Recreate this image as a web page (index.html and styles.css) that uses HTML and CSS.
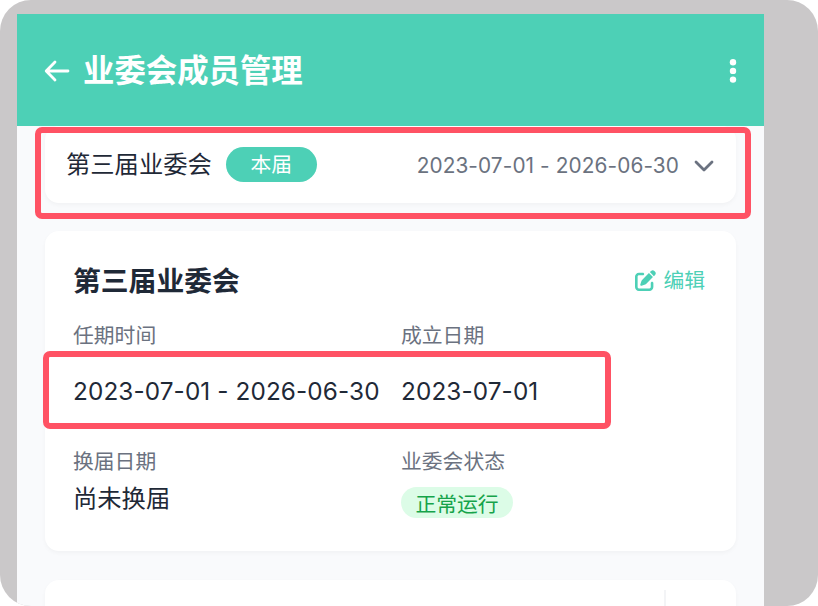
FILE: index.html
```html
<!DOCTYPE html>
<html lang="zh-CN">
<head>
<meta charset="utf-8">
<title>业委会成员管理</title>
<link rel="stylesheet" href="styles.css">
</head>
<body>
<div class="frame">
  <main class="screen">
    <header class="topbar">
      <svg class="back" viewBox="0 0 26 22"><path d="M11 2 2.2 11 11 20M2.5 11H24" /></svg>
      <h1>业委会成员管理</h1>
      <svg class="more" viewBox="0 0 8 26"><circle cx="4" cy="4.2" r="3.2"/><circle cx="4" cy="12.9" r="3.2"/><circle cx="4" cy="21.6" r="3.2"/></svg>
    </header>
    <div class="content">
      <section class="card term">
        <span class="term-name">第三届业委会</span>
        <span class="current">本届</span>
        <span class="range">2023-07-01 - 2026-06-30</span>
        <svg class="chevron" viewBox="0 0 20 12"><path d="M2 2l8 8 8-8"/></svg>
      </section>
      <section class="card detail">
        <div class="detail-head">
          <h2>第三届业委会</h2>
          <a class="edit"><svg viewBox="0 0 512 512"><path d="M471.600 21.700c-21.900-21.900-57.300-21.900-79.200 0L362.300 51.700l97.900 97.900 30.100-30.100c21.900-21.900 21.900-57.300 0-79.200L471.600 21.700zm-299.200 220c-6.100 6.100-10.800 13.600-13.500 21.900l-29.600 88.800c-2.900 8.600-.6 18.100 5.800 24.600s15.900 8.700 24.600 5.800l88.800-29.600c8.200-2.700 15.700-7.400 21.900-13.500L437.700 172.300 339.700 74.300 172.400 241.700zM96 64C43 64 0 107 0 160V416c0 53 43 96 96 96H352c53 0 96-43 96-96V320c0-17.700-14.300-32-32-32s-32 14.300-32 32v96c0 17.700-14.300 32-32 32H96c-17.700 0-32-14.300-32-32V160c0-17.700 14.300-32 32-32h96c17.700 0 32-14.300 32-32s-14.300-32-32-32H96z"/></svg><span>编辑</span></a>
        </div>
        <dl class="fields">
          <div><dt>任期时间</dt><dd class="date">2023-07-01 - 2026-06-30</dd></div>
          <div><dt>成立日期</dt><dd class="date">2023-07-01</dd></div>
          <div><dt>换届日期</dt><dd class="plain">尚未换届</dd></div>
          <div><dt>业委会状态</dt><dd><span class="status">正常运行</span></dd></div>
        </dl>
      </section>
      <section class="card next"><span class="divider"></span></section>
    </div>
  </main>
  <div class="mark mark-term"></div>
  <div class="mark mark-dates"></div>
</div>
</body>
</html>
```
FILE: styles.css
```css
* { box-sizing: border-box; }
body { margin: 0; background: #fff; font-family: Inter, "Noto Sans CJK SC", sans-serif; color: #1f2937; }
h1, h2, dl, dt, dd { margin: 0; }
.frame { position: relative; width: 818px; height: 606px; padding: 14px 54px 0 17px; background: #cac8c9; border-radius: 31px; overflow: hidden; }
.screen { height: 592px; background: #f9fafc; overflow: hidden; }
.topbar { display: flex; align-items: center; height: 112px; padding: 0 27px; background: #4dd0b6; color: #fff; }
.back { width: 26px; height: 22px; margin-top: 2px; fill: none; stroke: #fff; stroke-width: 2.8; stroke-linecap: round; stroke-linejoin: round; }
h1 { margin: 2px 0 0 13px; font-size: 31.4px; line-height: 46px; font-weight: 700; }
.more { width: 8px; height: 26px; margin: 2px 0 0 auto; fill: #fff; }
.content { padding: 0 28px; }
.card { background: #fff; border-radius: 14px; box-shadow: 0 2px 4px rgba(0,0,0,.035); }
.term { display: flex; align-items: center; height: 77px; padding: 0 22px 0 21px; }
.term-name { margin-top: -2px; font-size: 24.3px; line-height: 36px; }
.current { width: 91px; height: 35px; margin-left: 14px; border-radius: 18px; background: #4dd0b6; color: #fff; font-size: 20.8px; line-height: 36px; text-align: center; }
.range { margin: 2px 0 0 auto; color: #6b7280; font-size: 20.8px; letter-spacing: .1px; }
.chevron { width: 20px; height: 12px; margin: 3px 0 0 15px; fill: none; stroke: #6b7280; stroke-width: 2.8; stroke-linecap: round; stroke-linejoin: round; }
.detail { height: 320px; margin-top: 28px; padding: 29px 31px 0 28px; }
.detail-head { display: flex; align-items: center; justify-content: space-between; height: 42px; }
h2 { font-size: 27.8px; line-height: 42px; font-weight: 700; }
.edit { display: flex; align-items: center; gap: 7px; color: #4dd0b6; font-size: 20.8px; line-height: 30px; }
.edit svg { width: 21px; height: 21px; margin-top: -2px; fill: currentColor; }
.fields { display: grid; grid-template-columns: 306px 1fr; grid-template-rows: 126px 90px; column-gap: 22px; margin-top: 19px; }
dt { font-size: 20.8px; line-height: 30px; color: #6b7280; }
dd { font-size: 24.3px; line-height: 36px; white-space: nowrap; }
.date { margin-top: 22px; letter-spacing: .12px; }
.plain { margin-top: 3px; }
.status { display: block; width: 112px; height: 31px; margin-top: 10px; border-radius: 16px; background: #dcfce7; color: #16a34a; font-size: 20.8px; line-height: 35px; text-align: center; }
.next { height: 80px; margin-top: 29px; padding: 10px 70px 0 0; display: flex; justify-content: flex-end; }
.divider { width: 2px; background: #f3f4f6; }
.mark { position: absolute; border: 6px solid #ff5264; border-radius: 7px; }
.mark-term { left: 35px; top: 127px; width: 716px; height: 92px; }
.mark-dates { left: 43px; top: 351px; width: 568px; height: 78px; }
```
